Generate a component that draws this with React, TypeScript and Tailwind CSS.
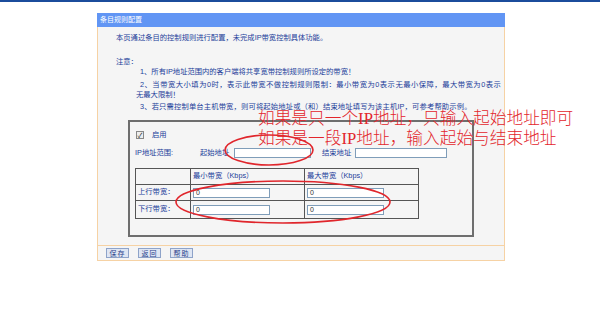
const cjk = "font-['Liberation_Sans','Noto_Sans_CJK_SC',sans-serif]";

function Field({ w, value = "" }: { w: string; value?: string }) {
  return (
    <div
      className={`${w} h-[10px] border border-[#7f9db9] bg-white pl-[2px] text-[7px] leading-[8px] text-[#333]`}
    >
      {value}
    </div>
  );
}

function Btn({ label }: { label: string }) {
  return (
    <div className="flex h-[10px] w-[23px] items-center justify-center border border-[#8ea3c9] bg-[#dfe6f3] text-[7px] leading-none tracking-[1px] text-[#2a3f8c]">
      {label}
    </div>
  );
}

export default function App() {
  const rows = [
    { label: "上行带宽：", h: "h-[16px]" },
    { label: "下行带宽：", h: "h-[17px]" },
  ];

  return (
    <div className={`relative h-[310px] w-[600px] overflow-hidden bg-white ${cjk} text-[#23409a]`}>
      <div className="h-[2px] bg-[#1b4c9c]" />

      <div className="ml-[97px] mt-[11px] w-[408px]">
        <div className="h-[14px] bg-[#6195f4] pl-[3px] text-[7px] leading-[14px] text-white">
          条目规则配置
        </div>

        <div className="border-x border-[#f6d2a4] bg-[#f5f5f5]">
          <div className="pl-[18px] pt-[6px] text-[7.3px] leading-[10px]">
            <p>本页通过条目的控制规则进行配置，未完成IP带宽控制具体功能。</p>
            <p className="mt-[14px]">注意：</p>
          </div>
          <div className="pl-[42px] text-[7.3px] leading-[10px]">
            <p>1、所有IP地址范围内的客户端将共享宽带控制规则所设定的带宽！</p>
            <p className="mt-[3px] tracking-[0.5px]">
              2、当带宽大小填为0时，表示此带宽不做控制规则限制：最小带宽为0表示无最小保障，最大带宽为0表示
            </p>
            <p className="-ml-[4px]">无最大限制！</p>
            <p className="mt-[2px] tracking-[0.15px]">
              3、若只需控制单台主机带宽，则可将起始地址或（和）结束地址填写为该主机IP，可参考帮助示例。
            </p>
          </div>

          <div className="ml-[30px] mt-[8px] w-[346px] border-2 border-[#6e6e6e] pb-[16px]">
            <div className="mt-[8px] flex h-[10px] items-center pl-[6px] text-[7.3px]">
              <span className="flex h-[8px] w-[8px] items-center justify-center border border-[#888] bg-[#eee] text-[7px] leading-none text-[#222]">
                ✓
              </span>
              <span className="ml-[8px]">启用</span>
            </div>

            <div className="mt-[8px] flex h-[10px] items-center pl-[5px] text-[7.3px]">
              <span className="w-[65px]">IP地址范围:</span>
              <span className="w-[34px]">起始地址</span>
              <Field w="w-[77px]" />
              <span className="ml-[11px] w-[33px]">结束地址</span>
              <Field w="w-[92px]" />
            </div>

            <div className="ml-[5px] mt-[10px] w-[284px] border border-[#555] text-[7.3px]">
              <div className="flex h-[16px] border-b border-[#555]">
                <div className="w-[55px] border-r border-[#555]" />
                <div className="flex w-[114px] items-center border-r border-[#555] pl-[2px]">
                  最小带宽（Kbps）
                </div>
                <div className="flex flex-1 items-center pl-[2px]">最大带宽（Kbps）</div>
              </div>
              {rows.map((r, i) => (
                <div
                  key={r.label}
                  className={`flex ${r.h} ${i === 0 ? "border-b border-[#555]" : ""}`}
                >
                  <div className="flex w-[55px] items-center border-r border-[#555] pl-[2px]">
                    {r.label}
                  </div>
                  <div className="flex w-[114px] items-center border-r border-[#555] pl-[2px]">
                    <Field w="w-[77px]" value="0" />
                  </div>
                  <div className="flex flex-1 items-center pl-[2px]">
                    <Field w="w-[77px]" value="0" />
                  </div>
                </div>
              ))}
            </div>
          </div>

          <div className="mt-[8px] flex h-[16px] items-center gap-[9px] border-y border-[#f6d2a4] pl-[8px]">
            <Btn label="保存" />
            <Btn label="返回" />
            <Btn label="帮助" />
          </div>
        </div>
      </div>

      {/* red annotations drawn over the page */}
      <div className="pointer-events-none absolute left-[258px] top-[109px] font-['Liberation_Serif','Noto_Sans_CJK_SC',serif] text-[16.7px] font-light leading-[20px] text-[#e3262c]">
        <p>如果是只一个IP地址，只输入起始地址即可</p>
        <p>如果是一段IP地址，输入起始与结束地址</p>
      </div>
      <svg className="pointer-events-none absolute left-0 top-0" width="600" height="310">
        <ellipse cx="269" cy="150" rx="44" ry="15" fill="none" stroke="#e0262c" strokeWidth="1.6" />
        <ellipse cx="283" cy="202" rx="107" ry="21" fill="none" stroke="#e0262c" strokeWidth="1.6" />
      </svg>
    </div>
  );
}
